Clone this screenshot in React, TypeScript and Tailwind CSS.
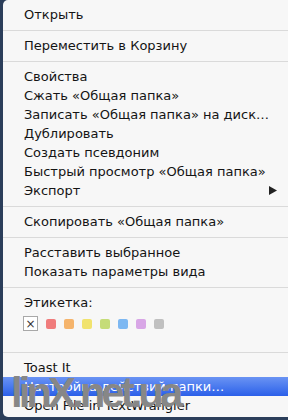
const labelColors = [
  "bg-[#f07c7c]",
  "bg-[#f5b46c]",
  "bg-[#f1e36e]",
  "bg-[#c5dc78]",
  "bg-[#7db8f2]",
  "bg-[#d8a6e6]",
  "bg-[#c0c0c0]",
];

function Item({ children, active, submenu }: { children: React.ReactNode; active?: boolean; submenu?: boolean }) {
  return (
    <div
      className={
        "h-[19px] leading-[19px] pl-[21px] pr-[10px] flex items-center justify-between whitespace-nowrap " +
        (active ? "bg-gradient-to-b from-[#6a93f3] to-[#2b5fe9] text-white" : "text-[#141414]")
      }
    >
      <span>{children}</span>
      {submenu && (
        <svg width="8" height="9" viewBox="0 0 8 9" className="mr-[1px]">
          <path d="M0 0 L8 4.5 L0 9 Z" fill="#222" />
        </svg>
      )}
    </div>
  );
}

function Separator() {
  return (
    <div className="pt-[6px] pb-[5px]">
      <div className="h-px bg-[#dadada]" />
    </div>
  );
}

export default function App() {
  return (
    <div className="relative w-[288px] h-[420px] overflow-hidden bg-[#2b3e5a]" style={{ fontFamily: '"DejaVu Sans", sans-serif' }}>
      <div className="ml-[3px] rounded-l-[5px] bg-[#f7f7f7] pt-[5px] pb-[2px] text-[13px]">
        <Item>Открыть</Item>
        <Separator />
        <Item>Переместить в Корзину</Item>
        <Separator />
        <Item>Свойства</Item>
        <Item>Сжать «Общая папка»</Item>
        <Item>Записать «Общая папка» на диск…</Item>
        <Item>Дублировать</Item>
        <Item>Создать псевдоним</Item>
        <Item>Быстрый просмотр «Общая папка»</Item>
        <Item submenu>Экспорт</Item>
        <Separator />
        <Item>Скопировать «Общая папка»</Item>
        <Separator />
        <Item>Расставить выбранное</Item>
        <Item>Показать параметры вида</Item>
        <Separator />
        <Item>Этикетка:</Item>
        <div className="mt-[4px] mb-[15px] h-[15px] pl-[20px] flex items-center gap-[8px]">
          <div className="w-[15px] h-[15px] border border-[#a8a8a8] bg-white flex items-center justify-center text-[12px] leading-none text-[#333]">
            ×
          </div>
          {labelColors.map((c) => (
            <div key={c} className={"w-[10px] h-[10px] rounded-[2px] " + c} />
          ))}
        </div>
        <Separator />
        <Item>Toast It</Item>
        <Item active>Настройка действий папки…</Item>
        <Item>Open File in TextWrangler</Item>
      </div>
      <div
        className="absolute left-[11px] top-[372px] text-[42px] font-black tracking-[-4px] text-[#878787] leading-[42px] pointer-events-none"
        style={{ fontFamily: '"Liberation Sans", sans-serif' }}
      >
        linX.net.ua
      </div>
    </div>
  );
}
